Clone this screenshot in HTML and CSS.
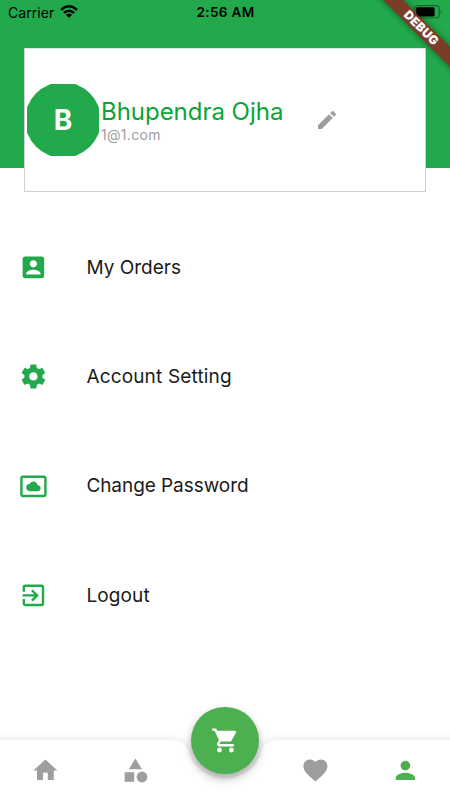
FILE: index.html
```html
<!DOCTYPE html>
<html lang="en">
<head>
<meta charset="utf-8">
<title>Profile</title>
<link rel="stylesheet" href="styles.css">
</head>
<body>
<div class="screen">
  <header class="header">
    <div class="status">
      <div class="carrier"><span>Carrier</span>
        <svg class="wifi" viewBox="0 0 18 13"><path d="M9 13 5.9 9.8Q9 7.3 12.1 9.8ZM3.1 7 4.8 8.7Q9 5.2 13.2 8.7L14.9 7Q9 1.9 3.1 7ZM.2 4.1 1.9 5.8Q9-.7 16.1 5.8L17.8 4.1Q9-3.9.2 4.1Z"/></svg>
      </div>
      <span class="time">2:56 AM</span>
      <svg class="battery" viewBox="0 0 29 14"><rect x=".6" y=".6" width="24.6" height="12.4" rx="3.2" fill="none" stroke="#000" stroke-opacity=".4" stroke-width="1.1"/><rect x="2.2" y="2.2" width="18.4" height="9.2" rx="1.2"/><path d="M26.8 4.5q2.4 2.3 0 4.6z" opacity=".4"/></svg>
    </div>
    <section class="card">
      <div class="avatar"><div class="disc">B</div></div>
      <div class="who"><div class="name">Bhupendra Ojha</div><div class="email">1@1.com</div></div>
      <svg class="edit" viewBox="0 0 24 24"><path d="M3 17.25V21h3.75L17.81 9.94l-3.75-3.75L3 17.25zM20.71 7.04a1 1 0 0 0 0-1.41l-2.34-2.34a1 1 0 0 0-1.41 0l-1.83 1.83 3.75 3.75 1.83-1.83z"/></svg>
    </section>
  </header>
  <main class="menu">
    <div class="item">
      <svg class="icon" viewBox="0 0 24 24"><path d="M3 5v14c0 1.1.89 2 2 2h14c1.1 0 2-.9 2-2V5c0-1.1-.9-2-2-2H5c-1.11 0-2 .9-2 2zm12 4c0 1.66-1.34 3-3 3s-3-1.34-3-3 1.34-3 3-3 3 1.34 3 3zm-9 8c0-2 4-3.1 6-3.1s6 1.1 6 3.1v1H6v-1z"/></svg>
      <span class="orders">My Orders</span>
    </div>
    <div class="item">
      <svg class="icon" viewBox="0 0 24 24"><path d="M19.43 12.98c.04-.32.07-.64.07-.98s-.03-.66-.07-.98l2.11-1.65c.19-.15.24-.42.12-.64l-2-3.46c-.12-.22-.39-.3-.61-.22l-2.49 1c-.52-.4-1.08-.73-1.69-.98l-.38-2.65C14.46 2.18 14.25 2 14 2h-4c-.25 0-.46.18-.49.42l-.38 2.65c-.61.25-1.17.59-1.69.98l-2.49-1c-.23-.09-.49 0-.61.22l-2 3.46c-.13.22-.07.49.12.64l2.11 1.65c-.04.32-.07.65-.07.98s.03.66.07.98l-2.11 1.65c-.19.15-.24.42-.12.64l2 3.46c.12.22.39.3.61.22l2.49-1c.52.4 1.08.73 1.69.98l.38 2.65c.03.24.24.42.49.42h4c.25 0 .46-.18.49-.42l.38-2.65c.61-.25 1.17-.59 1.69-.98l2.49 1c.23.09.49 0 .61-.22l2-3.46c.12-.22.07-.49-.12-.64l-2.11-1.65zM12 15.5c-1.93 0-3.5-1.57-3.5-3.5s1.57-3.5 3.5-3.5 3.5 1.57 3.5 3.5-1.57 3.5-3.5 3.5z"/></svg>
      <span class="account">Account Setting</span>
    </div>
    <div class="item">
      <svg class="icon" viewBox="0 0 24 24"><path d="M9 16h6.5a2.5 2.5 0 0 0 0-5h-.05c-.24-1.69-1.69-3-3.45-3-1.4 0-2.6.83-3.16 2.02h-.16A2.994 2.994 0 0 0 6 13c0 1.66 1.34 3 3 3zM21 3H3c-1.1 0-2 .9-2 2v14c0 1.1.9 2 2 2h18c1.1 0 2-.9 2-2V5c0-1.1-.9-2-2-2zm0 16.01H3V4.99h18v14.02z"/></svg>
      <span class="password">Change Password</span>
    </div>
    <div class="item">
      <svg class="icon" viewBox="0 0 24 24"><path d="M10.09 15.59L11.5 17l5-5-5-5-1.41 1.41L12.67 11H3v2h9.67l-2.58 2.59zM19 3H5a2 2 0 0 0-2 2v4h2V5h14v14H5v-4H3v4a2 2 0 0 0 2 2h14c1.1 0 2-.9 2-2V5c0-1.1-.9-2-2-2z"/></svg>
      <span class="logout">Logout</span>
    </div>
  </main>
  <footer class="nav">
    <svg class="bar" viewBox="0 0 450 60"><path d="M-20 0H167.4Q185.4 0 187.76 9.37A38.4 38.4 0 0 0 262.24 9.37Q264.6 0 282.6 0H470V80H-20Z"/></svg>
    <div class="tabs">
      <svg viewBox="0 0 24 24"><path d="M10 20v-6h4v6h5v-8h3L12 3 2 12h3v8z"/></svg>
      <svg viewBox="0 0 24 24"><path d="M12 2l-5.5 9h11z"/><circle cx="17.5" cy="17.5" r="4.5"/><path d="M3 13.5h8v8H3z"/></svg>
      <span></span>
      <svg viewBox="0 0 24 24"><path d="M12 21.35l-1.45-1.32C5.4 15.36 2 12.28 2 8.5 2 5.42 4.42 3 7.5 3c1.74 0 3.41.81 4.5 2.09C13.09 3.81 14.76 3 16.5 3 19.58 3 22 5.42 22 8.5c0 3.78-3.4 6.86-8.55 11.54L12 21.35z"/></svg>
      <svg class="active" viewBox="0 0 24 24"><path d="M12 12c2.21 0 4-1.79 4-4s-1.79-4-4-4-4 1.79-4 4 1.79 4 4 4zm0 2c-2.67 0-8 1.34-8 4v2h16v-2c0-2.66-5.33-4-8-4z"/></svg>
    </div>
    <div class="fab"><svg viewBox="0 0 24 24"><path d="M7 18c-1.1 0-1.99.9-1.99 2S5.9 22 7 22s2-.9 2-2-.9-2-2-2zM1 2v2h2l3.6 7.59-1.35 2.45c-.16.28-.25.61-.25.96 0 1.1.9 2 2 2h12v-2H7.42c-.14 0-.25-.11-.25-.25l.03-.12.9-1.63h7.45c.75 0 1.41-.41 1.75-1.03l3.58-6.49A1 1 0 0 0 20 4H5.21l-.94-2H1zm16 16c-1.1 0-1.99.9-1.99 2s.89 2 1.99 2 2-.9 2-2-.9-2-2-2z"/></svg></div>
  </footer>
  <div class="ribbon">DEBUG</div>
</div>
</body>
</html>
```

FILE: styles.css
```css
* { box-sizing: border-box; }
body { margin: 0; }
.screen {
  position: relative;
  width: 450px;
  height: 800px;
  overflow: hidden;
  display: flex;
  flex-direction: column;
  background: #fff;
  font-family: Inter, "Liberation Sans", sans-serif;
}
svg { display: block; flex: none; }
.header { height: 168px; flex: none; background: #22a94b; }
.status {
  height: 48px;
  padding: 5px 7px 0 8px;
  display: grid;
  grid-template-columns: 1fr auto 1fr;
  align-items: start;
  color: #000;
}
.carrier { display: flex; gap: 6px; font-size: 14px; line-height: 15px; letter-spacing: .05px; }
.wifi { width: 18px; height: 13px; }
.time { font-size: 13.6px; line-height: 15px; font-weight: 600; letter-spacing: .3px; }
.battery { width: 29px; height: 14px; justify-self: end; }
.card {
  position: relative;
  width: 402px;
  height: 144px;
  margin: 0 24px;
  padding-left: 2px;
  display: flex;
  align-items: center;
  background: #fff;
  border: 1px solid #d0d0d0;
  border-top-color: #22a94b33;
}
.avatar {
  width: 72px;
  height: 72px;
  flex: none;
  display: flex;
  align-items: center;
  justify-content: center;
  overflow: hidden;
}
.disc {
  width: 76.8px;
  height: 76.8px;
  flex: none;
  border-radius: 50%;
  background: #22a94b;
  color: #fff;
  font-size: 28px;
  line-height: 77.8px;
  font-weight: 700;
  text-align: center;
}
.who { width: 216px; flex: none; padding-left: 2px; }
.name { color: #0aa536; font-size: 24px; line-height: 29px; letter-spacing: -.03px; white-space: nowrap; }
.email { color: #9e9e9e; font-size: 14px; line-height: 17px; letter-spacing: .3px; }
.edit { width: 24px; height: 24px; fill: #9e9e9e; }
.menu { flex: 1; padding-top: 45px; }
.item {
  height: 109.2px;
  padding-left: 19.2px;
  display: flex;
  align-items: center;
  gap: 38.4px;
  color: #1a1a1a;
  font-size: 19px;
}
.orders { letter-spacing: .02px; }
.account { letter-spacing: .16px; }
.password { letter-spacing: -.06px; }
.logout { letter-spacing: .12px; }
.icon { width: 28.8px; height: 28.8px; fill: #22a94b; }
.nav { position: relative; height: 60px; flex: none; }
.bar {
  position: absolute;
  inset: 0;
  width: 450px;
  height: 60px;
  overflow: visible;
  fill: #fff;
  filter: drop-shadow(0 0 4px rgba(0, 0, 0, .12));
}
.tabs {
  position: relative;
  height: 60px;
  display: grid;
  grid-template-columns: repeat(5, 1fr);
  place-items: center;
  fill: #9e9e9e;
}
.tabs svg { width: 28.8px; height: 28.8px; }
.tabs .active { fill: #4caf50; }
.fab {
  position: absolute;
  left: 191.4px;
  top: -33.2px;
  width: 67.2px;
  height: 67.2px;
  display: grid;
  place-items: center;
  border-radius: 50%;
  background: #4caf50;
  box-shadow: 0 3px 6px rgba(0, 0, 0, .22), 0 6px 12px rgba(0, 0, 0, .14);
}
.fab svg { width: 28.8px; height: 28.8px; fill: #fff; }
.ribbon {
  position: absolute;
  left: 361.3px;
  top: 21.3px;
  width: 120px;
  height: 14.4px;
  transform: rotate(45deg);
  background: rgba(138, 45, 34, .87);
  box-shadow: 0 0 7px rgba(0, 0, 0, .45);
  color: #fff;
  font-size: 12.2px;
  line-height: 14.4px;
  font-weight: 900;
  letter-spacing: .2px;
  text-align: center;
}
```
